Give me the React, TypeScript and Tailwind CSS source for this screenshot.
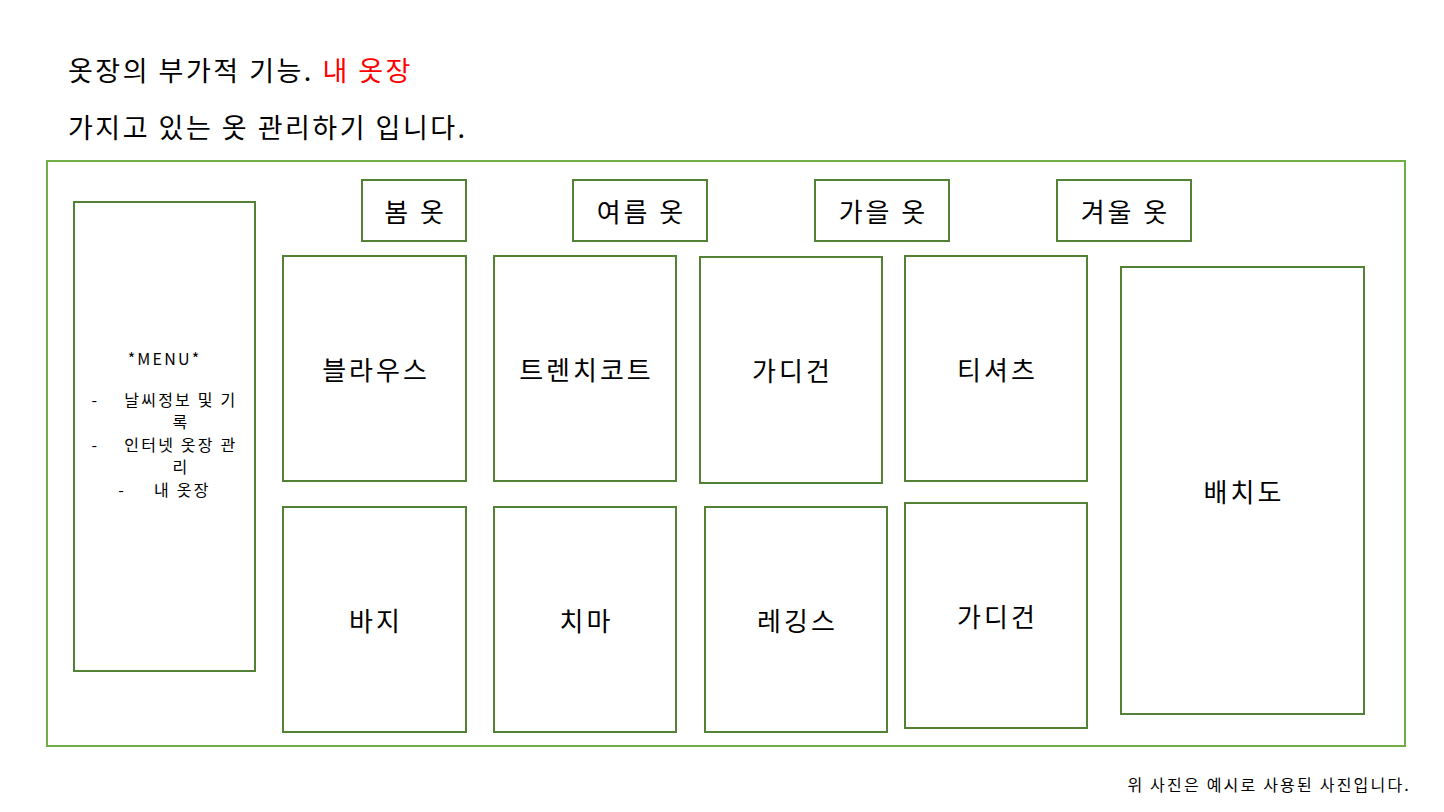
const box = "flex items-center justify-center border-2 border-[#538135] bg-white";
const label = "text-[26px] leading-none tracking-[3px] pl-[3px]";

function Tab({ text, className }: { text: string; className: string }) {
  return <div className={`${box} ${label} h-[63px] ${className}`}>{text}</div>;
}

function Item({ text, className }: { text: string; className: string }) {
  return <div className={`${box} ${label} ${className}`}>{text}</div>;
}

function MenuLine({ children, gap }: { children: React.ReactNode; gap: string }) {
  return (
    <div className={`flex justify-center ${gap}`}>
      <span>-</span>
      <span className="text-center">{children}</span>
    </div>
  );
}

export default function App() {
  return (
    <div className="min-h-[812px] w-[1444px] bg-white text-black [font-family:'Noto_Sans_CJK_KR',sans-serif]">
      <div className="pl-[68px] pt-[50px] text-[27px] tracking-[2.5px]">
        <p className="leading-[40px]">
          옷장의 부가적 기능. <span className="text-[#ff0000]">내 옷장</span>
        </p>
        <p className="mt-[17px] leading-[40px]">가지고 있는 옷 관리하기 입니다.</p>
      </div>

      <div className="ml-[46px] mt-[13px] flex h-[587px] w-[1360px] border-2 border-[#70ad47]">
        <aside className="ml-[25px] mt-[39px] h-[471px] w-[183px] border-2 border-[#538135] pt-[144px] text-[16px] leading-[22.5px] tracking-[2.2px]">
          <p className="text-center">*MENU*</p>
          <div className="mt-[18px]">
            <MenuLine gap="gap-[25px]">
              날씨정보 및 기<br />록
            </MenuLine>
            <MenuLine gap="gap-[25px]">
              인터넷 옷장 관<br />리
            </MenuLine>
            <MenuLine gap="gap-[28px]">내 옷장</MenuLine>
          </div>
        </aside>

        <div className="ml-[26px] flex flex-col">
          <div className="mt-[17px] flex">
            <Tab text="봄 옷" className="ml-[79px] w-[106px]" />
            <Tab text="여름 옷" className="ml-[105px] w-[136px]" />
            <Tab text="가을 옷" className="ml-[106px] w-[136px]" />
            <Tab text="겨울 옷" className="ml-[106px] w-[136px]" />
          </div>

          <div className="mt-[13px] flex items-start">
            <div className="flex flex-col gap-[24px]">
              <Item text="블라우스" className="h-[227px] w-[185px]" />
              <Item text="바지" className="h-[227px] w-[185px]" />
            </div>
            <div className="ml-[26px] flex flex-col gap-[24px]">
              <Item text="트렌치코트" className="h-[227px] w-[184px]" />
              <Item text="치마" className="h-[227px] w-[184px]" />
            </div>
            <div className="ml-[22px] flex flex-col items-start">
              <Item text="가디건" className="mt-[1px] h-[228px] w-[184px]" />
              <Item text="레깅스" className="ml-[5px] mt-[22px] h-[227px] w-[184px]" />
            </div>
            <div className="ml-[16px] flex flex-col gap-[20px]">
              <Item text="티셔츠" className="h-[227px] w-[184px]" />
              <Item text="가디건" className="h-[227px] w-[184px]" />
            </div>
            <Item text="배치도" className="ml-[32px] mt-[11px] h-[449px] w-[245px]" />
          </div>
        </div>
      </div>

      <p className="mt-[25px] pr-[33px] text-right text-[16px] leading-[24px] tracking-[2.2px]">
        위 사진은 예시로 사용된 사진입니다.
      </p>
    </div>
  );
}
